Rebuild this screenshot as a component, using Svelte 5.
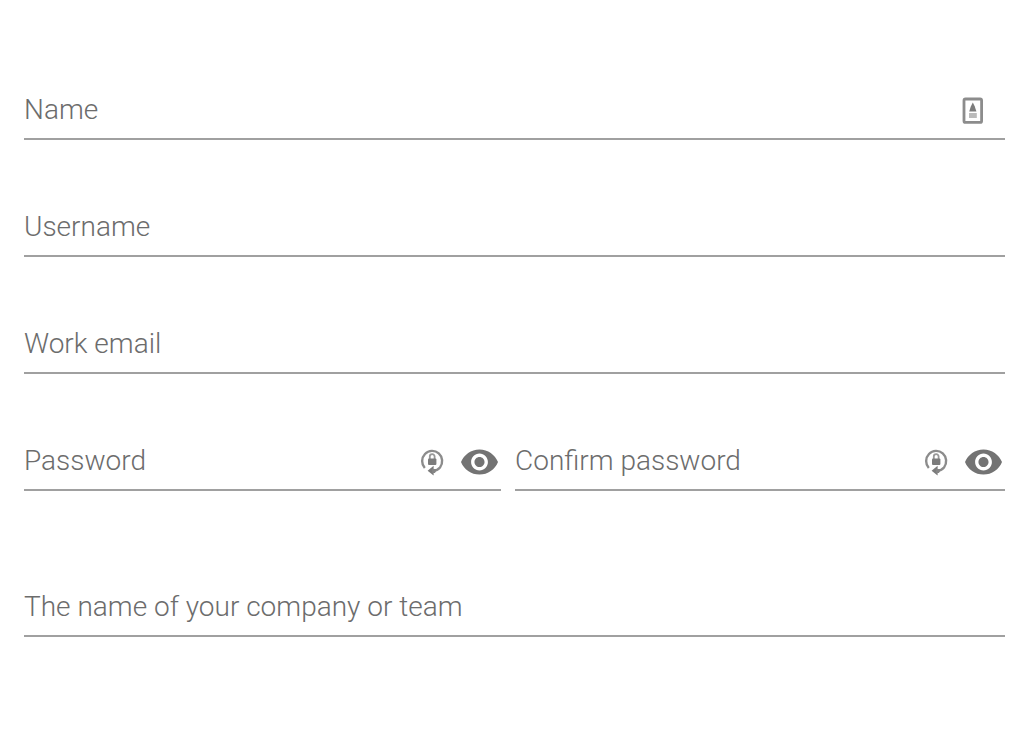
<script>
    let form = {
        name: '',
        username: '',
        email: '',
        password: '',
        confirm: '',
        company: ''
    };

    let visible = {
        password: false,
        confirm: false
    };

    const fields = [
        { id: 'name', label: 'Name', type: 'text', icon: 'contact' },
        { id: 'username', label: 'Username', type: 'text' },
        { id: 'email', label: 'Work email', type: 'email' },
        { id: 'password', label: 'Password', type: 'password' },
        { id: 'confirm', label: 'Confirm password', type: 'password' },
        { id: 'company', label: 'The name of your company or team', type: 'text' }
    ];

    function toggle(id) {
        visible[id] = !visible[id];
    }
</script>

<form class="signup" on:submit|preventDefault>
    {#each fields as field}
    <div class="field {field.id}">
        <label for={field.id} class:floating={form[field.id]}>{field.label}</label>
        <input
            id={field.id}
            type={visible[field.id] ? 'text' : field.type}
            value={form[field.id]}
            on:input={(e) => form[field.id] = e.target.value}
        >
        {#if field.icon === 'contact'}
        <svg class="contact-icon" viewBox="0 0 22 28" aria-hidden="true">
            <rect x="2" y="2" width="17.6" height="23.4" rx="1.5" fill="none" stroke="#8c8c8c" stroke-width="2.8" />
            <path d="M10.8 5.5 L12.8 9.5 L14.4 14.5 H7.2 L8.8 9.5 Z" fill="#7c7c7c" />
            <path d="M7 16 H14.8 V21 H7 Z" fill="#bbb" />
        </svg>
        {/if}
        {#if field.type === 'password'}
        <svg class="key-icon" viewBox="0 0 24 30" aria-hidden="true">
            <path d="M4.8 21 A10 10.2 0 1 1 20 20.4 Q17.5 23.4 13 23.8" fill="none" stroke="#8c8c8c" stroke-width="2.4" />
            <path d="M13.6 18.8 V28.6 L7.6 23.8 Z" fill="#7c7c7c" />
            <path d="M12 22 H17 L15 26 H12 Z" fill="#858585" />
            <path d="M9.8 12.5 V9.6 A2.4 2.4 0 0 1 14.6 9.6 V12.5" fill="none" stroke="#999" stroke-width="1.8" />
            <rect x="8" y="11.6" width="8.4" height="6.4" rx="1" fill="#7c7c7c" />
        </svg>
        <button type="button" class="eye" aria-label="Show password" on:click={() => toggle(field.id)}>
            <svg viewBox="1 4.5 22 15" aria-hidden="true">
                <path fill="#737373" d="M12 4.5C7 4.5 2.73 7.61 1 12c1.73 4.39 6 7.5 11 7.5s9.27-3.11 11-7.5c-1.73-4.39-6-7.5-11-7.5zM12 17c-2.76 0-5-2.24-5-5s2.24-5 5-5 5 2.24 5 5-2.24 5-5 5zm0-8c-1.66 0-3 1.34-3 3s1.34 3 3 3 3-1.34 3-3-1.34-3-3-3z" />
            </svg>
        </button>
        {/if}
    </div>
    {/each}
</form>

<style>
:global(body) {
    margin: 0;
    background: #fff;
}
.signup {
    display: grid;
    grid-template-columns: 477fr 490fr;
    column-gap: 14px;
    row-gap: 61px;
    padding: 84px 19px 100px 24px;
    font-family: Roboto, sans-serif;
    font-size: 28px;
    font-weight: 300;
}
.field {
    position: relative;
    display: flex;
    align-items: center;
    grid-column: 1 / -1;
    height: 54px;
    border-bottom: 2px solid #a0a0a0;
}
.password,
.confirm {
    grid-column: auto;
}
.company {
    margin-top: 29px;
}
label {
    position: absolute;
    left: 0;
    top: 8px;
    line-height: 36px;
    color: #6c6c6c;
    pointer-events: none;
}
.floating,
.field:focus-within label {
    top: -20px;
    font-size: 20px;
}
input {
    flex: 1;
    min-width: 0;
    height: 36px;
    padding: 0;
    border: 0;
    outline: 0;
    background: none;
    color: #333;
    font: inherit;
}
svg {
    display: block;
}
.contact-icon {
    width: 22px;
    height: 28px;
    margin-right: 21px;
}
.key-icon {
    width: 24px;
    height: 30px;
    margin-right: 17px;
}
.eye {
    margin: 0 3px 0 0;
    padding: 0;
    border: 0;
    background: none;
    cursor: pointer;
}
.eye svg {
    width: 37px;
    height: 26px;
}
</style>
